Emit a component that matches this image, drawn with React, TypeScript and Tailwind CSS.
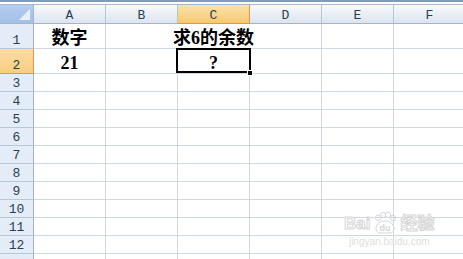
import React from 'react'

const cols = ['A', 'B', 'C', 'D', 'E', 'F']
const rows = [1, 2, 3, 4, 5, 6, 7, 8, 9, 10, 11, 12, 13]

const cells: Record<string, string> = {
  A1: '数字',
  C1: '求6的余数',
  A2: '21',
  C2: '?',
}

// text overflows from C1 over B/C/D, so hide those gridlines
const noRightLine = ['B1', 'C1']

const headFont = "font-['Liberation_Mono',monospace] text-[13px] leading-none text-[#27414f]"
const cellFont = "font-['Liberation_Serif','Noto_Sans_CJK_SC',serif] font-bold text-[18px] leading-none text-black"

function BaiduMark() {
  return (
    <div className="absolute left-[344px] top-[212px] flex flex-col items-center pointer-events-none select-none">
      <div className="flex items-center gap-[2px] font-['Liberation_Sans','Noto_Sans_CJK_SC',sans-serif] font-bold text-[17px] leading-none text-white [-webkit-text-stroke:1px_#d6d6d6]">
        <span>Bai</span>
        <svg width="26" height="22" viewBox="0 0 26 22">
          <g fill="none" stroke="#d6d6d6" strokeWidth="1">
            <ellipse cx="6" cy="6" rx="2.5" ry="3" />
            <ellipse cx="11" cy="3" rx="2.5" ry="2.6" />
            <ellipse cx="16" cy="3" rx="2.5" ry="2.6" />
            <ellipse cx="21" cy="6" rx="2.5" ry="3" />
            <path d="M4 17 C4 11 9 9 13 9 C17 9 22 11 22 17 C22 21 18 21 13 21 C8 21 4 21 4 17 Z" />
          </g>
          <text x="13" y="19" textAnchor="middle" fontSize="9" fontWeight="bold" fill="#d6d6d6" fontFamily="Liberation Sans, sans-serif">du</text>
        </svg>
        <span>经验</span>
      </div>
      <div className="mt-[3px] font-['Liberation_Sans',sans-serif] text-[10px] leading-none text-[#dedede]">jingyan.baidu.com</div>
    </div>
  )
}

export default function App() {
  return (
    <div className="relative w-[463px] h-[259px] overflow-hidden bg-white">
      {/* top strip */}
      <div className="h-[5px] border-t-2 border-t-[#7f9cc0] border-b border-b-[#a9b9cd] bg-white" />

      <div className="grid grid-cols-[34px_repeat(6,72px)] grid-rows-[19px_25px_25px_repeat(11,18px)]">
        {/* corner */}
        <div className="relative border-r border-b border-[#9eb6ce] bg-gradient-to-b from-[#b5cdef] to-[#a3bfe6]">
          <div className="absolute right-[3px] bottom-[3px] w-0 h-0 border-l-[11px] border-l-transparent border-b-[11px] border-b-[#e9f0fa]" />
        </div>
        {cols.map((c) => (
          <div
            key={c}
            className={
              c === 'C'
                ? `flex items-center justify-center pt-[2px] border-r border-b border-[#f29436] bg-gradient-to-b from-[#fbe1ac] to-[#f6c96f] ${headFont}`
                : `flex items-center justify-center pt-[2px] border-r border-b border-r-[#b4c3d6] border-b-[#9eb6ce] bg-gradient-to-b from-[#f8fafd] to-[#dde4ee] ${headFont}`
            }
          >
            {c}
          </div>
        ))}

        {rows.map((r) => (
          <React.Fragment key={r}>
            <div
              className={
                r === 2
                  ? `flex items-end justify-center pb-[1px] border-r border-b border-[#f29436] bg-gradient-to-b from-[#fcdca3] to-[#f8cf7f] ${headFont}`
                  : `flex items-end justify-center pb-[1px] border-r border-r-[#9eb6ce] border-b border-b-[#b6c6db] bg-[#e4ecf7] ${headFont}`
              }
            >
              {/* row 13 is only a sliver at the bottom edge, its number is out of view */}
              {r < 13 ? r : ''}
            </div>
            {cols.map((c) => {
              const id = `${c}${r}`
              const text = cells[id]
              return (
                <div
                  key={id}
                  className={`relative flex items-center justify-center border-b border-b-[#d0d7e5] border-r ${
                    noRightLine.includes(id) ? 'border-r-white' : 'border-r-[#d0d7e5]'
                  }`}
                >
                  {text && (
                    <span className={`relative z-10 whitespace-nowrap pt-[3px] ${cellFont}`}>{text}</span>
                  )}
                  {id === 'C2' && (
                    <>
                      <div className="absolute -left-[2px] -top-[1px] -right-[2px] bottom-0 border-2 border-black z-20" />
                      <div className="absolute -right-[4px] -bottom-[3px] w-[6px] h-[6px] bg-black border border-white z-30" />
                    </>
                  )}
                </div>
              )
            })}
          </React.Fragment>
        ))}
      </div>

      <BaiduMark />
    </div>
  )
}
